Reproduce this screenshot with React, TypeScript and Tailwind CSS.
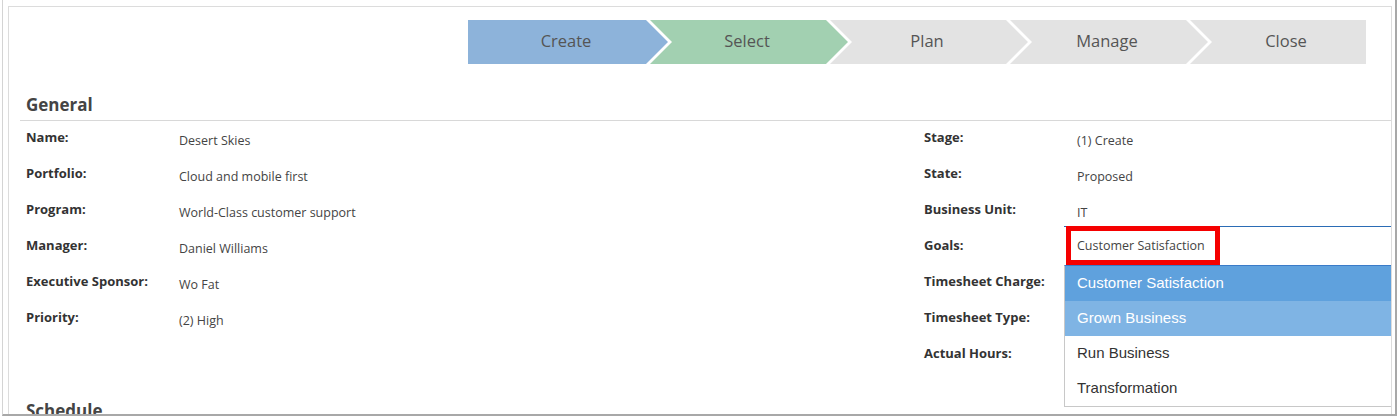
const steps = [
  { label: 'Create', bg: 'bg-[#8db3da]', w: 'w-[200px]', clip: '[clip-path:polygon(0_0,178px_0,100%_50%,178px_100%,0_100%)]', ml: '' },
  { label: 'Select', bg: 'bg-[#a2d0b1]', w: 'w-[198px]', clip: '[clip-path:polygon(0_0,176px_0,100%_50%,176px_100%,0_100%,22px_50%)]', ml: '-ml-[18px]' },
  { label: 'Plan', bg: 'bg-[#e3e3e3]', w: 'w-[198px]', clip: '[clip-path:polygon(0_0,176px_0,100%_50%,176px_100%,0_100%,22px_50%)]', ml: '-ml-[18px]' },
  { label: 'Manage', bg: 'bg-[#e3e3e3]', w: 'w-[198px]', clip: '[clip-path:polygon(0_0,176px_0,100%_50%,176px_100%,0_100%,22px_50%)]', ml: '-ml-[18px]' },
  { label: 'Close', bg: 'bg-[#e3e3e3]', w: 'w-[176px]', clip: '[clip-path:polygon(0_0,100%_0,100%_100%,0_100%,22px_50%)]', ml: '-ml-[18px]' },
]

const left = [
  ['Name:', 'Desert Skies'],
  ['Portfolio:', 'Cloud and mobile first'],
  ['Program:', 'World-Class customer support'],
  ['Manager:', 'Daniel Williams'],
  ['Executive Sponsor:', 'Wo Fat'],
  ['Priority:', '(2) High'],
]

const right = [
  ['Stage:', '(1) Create'],
  ['State:', 'Proposed'],
  ['Business Unit:', 'IT'],
]

const rightAfter = ['Timesheet Charge:', 'Timesheet Type:', 'Actual Hours:']

const options = [
  { label: 'Customer Satisfaction', cls: 'bg-[#5fa1dd] text-white' },
  { label: 'Grown Business', cls: 'bg-[#7fb4e4] text-white' },
  { label: 'Run Business', cls: 'bg-white text-[#333]' },
  { label: 'Transformation', cls: 'bg-white text-[#333]' },
]

const Row = ({ label, value }: { label: string; value: string }) => (
  <div className="flex h-9">
    <div className="w-[153px] text-[13px] font-bold text-[#333] leading-[18px]">{label}</div>
    <div className="pt-[4px] text-[12.5px] text-[#444] leading-[18px]">{value}</div>
  </div>
)

export default function App() {
  return (
    <div className="w-[1400px] h-[419px] bg-white overflow-hidden font-['Open_Sans',sans-serif]">
      <div className="ml-[2px] w-[1395px] h-[416px] border-l border-l-[#d4d4d4] border-r-2 border-r-[#a8a8a8] border-b-2 border-b-[#a8a8a8] pl-[5px] pt-[6px] pr-[3px]">
        <div className="h-[408px] border border-[#dcdcdc] border-b-0 overflow-hidden relative">
          <div className="flex pl-[459px] pt-[13px]">
            {steps.map((s) => (
              <div
                key={s.label}
                className={`${s.w} ${s.ml} ${s.bg} ${s.clip} h-[44px] flex items-center justify-center pb-[2px] ${s.label === 'Close' ? 'pl-[16px]' : 'pr-[4px]'} text-[16.5px] text-[#555]`}
              >
                {s.label}
              </div>
            ))}
          </div>

          <div className="pl-[11px] mt-[26px]">
            <h2 className="pl-[6px] text-[17px] font-bold text-[#444] leading-[30px] border-b border-[#d8d8d8]">General</h2>
          </div>

          <div className="flex pl-[17px] pt-[7px]">
            <div className="w-[898px]">
              {left.map(([l, v]) => (
                <Row key={l} label={l} value={v} />
              ))}
            </div>
            <div className="flex-1">
              {right.map(([l, v]) => (
                <Row key={l} label={l} value={v} />
              ))}
              <div className="flex">
                <div className="w-[140px] h-9 text-[13px] font-bold text-[#333] leading-[18px]">Goals:</div>
                <div className="flex-1 relative">
                  <div className="h-[38px] -mt-[10px] border-t border-[#2b6cb5] pl-[2px]">
                    <div className="relative z-10 w-[154px] h-[39px] border-[5px] border-[#f50000] bg-white pl-[6px] pt-[6px] text-[12.5px] text-[#444] leading-[18px] -mt-[1px]">
                      Customer Satisfaction
                    </div>
                  </div>
                  <div className="absolute left-0 right-0 top-[29px] border border-[#c8c8c8] border-t-[#3a7bc8] border-r-0 font-['Liberation_Sans',sans-serif] text-[15px]">
                    {options.map((o) => (
                      <div key={o.label} className={`${o.cls} h-[35px] flex items-center pl-[12px]`}>
                        {o.label}
                      </div>
                    ))}
                  </div>
                </div>
              </div>
              {rightAfter.map((l) => (
                <div key={l} className="h-9 text-[13px] font-bold text-[#333] leading-[18px]">{l}</div>
              ))}
            </div>
          </div>

          <h2 className="pl-[17px] mt-[16px] text-[17px] font-bold text-[#444] leading-[30px]">Schedule</h2>
        </div>
      </div>
    </div>
  )
}
